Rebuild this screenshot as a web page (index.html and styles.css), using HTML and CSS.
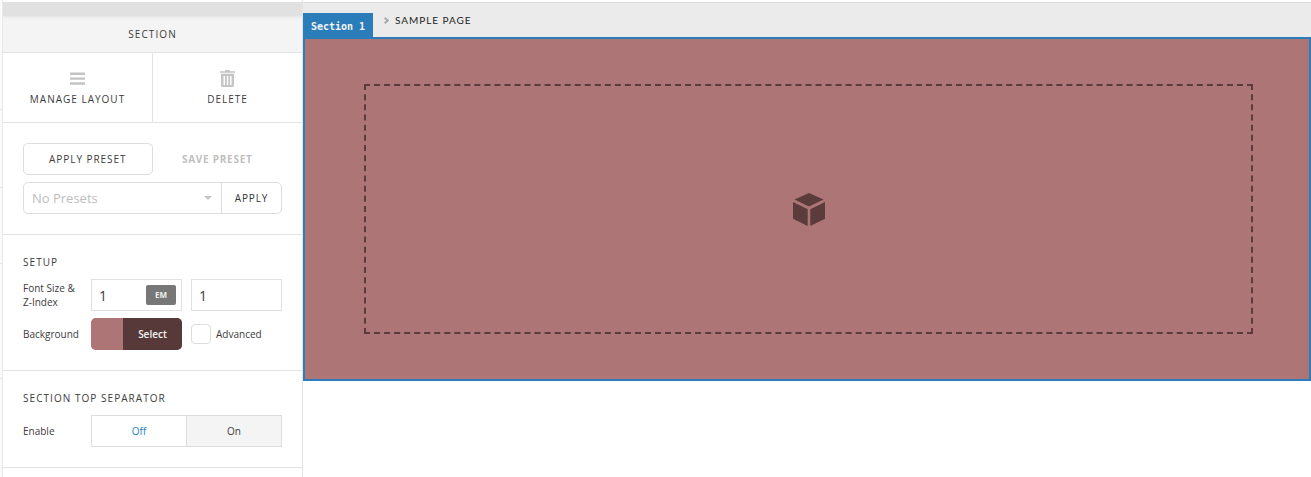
FILE: index.html
```html
<!DOCTYPE html>
<html lang="en">
<head>
<meta charset="utf-8">
<title>Section</title>
<link rel="stylesheet" href="styles.css">
</head>
<body>
<div class="app">
  <div class="gutter"></div>
  <aside class="panel">
    <div class="panel-top"></div>
    <div class="panel-title">SECTION</div>
    <div class="actions">
      <div class="action">
        <svg class="icon" width="15" height="14" viewBox="0 0 15 14"><path d="M0 1h15v2.400H0zM0 5.900h15v2.400H0zM0 10.800h15v2.400H0z" fill="#c4c4c4"/></svg>
        <span>MANAGE LAYOUT</span>
      </div>
      <div class="action">
        <svg class="icon" width="15" height="17" viewBox="0 0 15 17"><path d="M5.500 0h4l.6 1.200H15v1.600H0V1.200h4.900zM1 3.800h13V15.500a1.500 1.500 0 0 1-1.500 1.500h-10A1.500 1.500 0 0 1 1 15.500zM3.500 6v9h1.500V6zM6.800 6v9h1.500V6zM10 6v9h1.500V6z" fill="#c4c4c4" fill-rule="evenodd"/></svg>
        <span>DELETE</span>
      </div>
    </div>
    <section class="group presets">
      <div class="preset-row">
        <button class="btn-preset">APPLY PRESET</button>
        <span class="save-preset">SAVE PRESET</span>
      </div>
      <div class="preset-select">
        <span class="placeholder">No Presets</span>
        <span class="caret"></span>
        <span class="apply">APPLY</span>
      </div>
    </section>
    <section class="group setup">
      <h3 class="heading">SETUP</h3>
      <div class="field-row">
        <label class="label two-line">Font Size &amp; Z-Index</label>
        <div class="input em-input"><span>1</span><b class="unit">EM</b></div>
        <div class="input"><span>1</span></div>
      </div>
      <div class="field-row bg-row">
        <label class="label">Background</label>
        <div class="color"><i class="swatch"></i><b class="select">Select</b></div>
        <div class="check"><i class="box"></i><span>Advanced</span></div>
      </div>
    </section>
    <section class="group separator">
      <h3 class="heading">SECTION TOP SEPARATOR</h3>
      <div class="field-row">
        <label class="label">Enable</label>
        <div class="toggle"><span class="off">Off</span><span class="on">On</span></div>
      </div>
    </section>
  </aside>
  <main class="stage">
    <div class="crumbs">
      <span class="tag">Section 1</span>
      <span class="sep"></span>
      <span class="page">SAMPLE PAGE</span>
    </div>
    <div class="hero">
      <div class="drop">
        <svg width="32" height="33" viewBox="0 0 32 33"><path d="M16 0 30.500 6.500 16 13.500 1.500 6.500zM0 9 14.700 16.200V33L0 25.800zM32 9 17.300 16.200V33L32 25.800z" fill="#5b3b3b"/></svg>
      </div>
    </div>
  </main>
</div>
</body>
</html>
```
FILE: styles.css
```css
* { box-sizing: border-box; }
html, body { margin: 0; height: 477px; overflow: hidden; background: #fff; }
body { font-family: "Open Sans", sans-serif; color: #3c3c3c; }
.app { display: flex; height: 477px; }
.gutter {
  width: 3px; flex: none;
  background:
    linear-gradient(#e6e6e6, #e6e6e6) 0 109px / 2px 1px no-repeat,
    linear-gradient(#e6e6e6, #e6e6e6) 0 187px / 2px 1px no-repeat,
    linear-gradient(#e6e6e6, #e6e6e6) 0 263px / 2px 1px no-repeat,
    linear-gradient(#e6e6e6, #e6e6e6) 0 378px / 2px 1px no-repeat,
    linear-gradient(90deg, #fafafa 0 2px, #e8e8e8 2px);
}
.panel { width: 300px; flex: none; border-right: 1px solid #e4e4e4; background: #fff; padding-top: 2px; overflow: hidden; }
.panel-top { height: 14px; background: #e1e1e1; box-shadow: 0 1px 3px rgba(0,0,0,.08); position: relative; }
.panel-title { height: 37px; line-height: 36px; background: #f4f4f4; border-bottom: 1px solid #e3e3e3; text-align: center; font-size: 10px; font-weight: 500; letter-spacing: 1.1px; }
.actions { display: flex; height: 70px; border-bottom: 1px solid #e3e3e3; }
.action { flex: 1; display: flex; flex-direction: column; align-items: center; justify-content: flex-start; height: 69px; padding-top: 17px; font-size: 10px; font-weight: 500; letter-spacing: 1px; }
.action:first-child { border-right: 1px solid #e3e3e3; }
.action .icon { height: 17px; margin-bottom: 5px; }
.action span { line-height: 14px; }
.group { border-bottom: 1px solid #e3e3e3; padding: 0 20px; }
.presets { height: 112px; padding-top: 20px; }
.preset-row { display: flex; align-items: center; }
.btn-preset { width: 130px; height: 32px; border: 1px solid #ddd; border-radius: 5px; background: #fff; font: 500 10px "Open Sans", sans-serif; letter-spacing: .95px; color: #3c3c3c; padding: 0; }
.save-preset { width: 130px; text-align: center; font-size: 10px; font-weight: 700; letter-spacing: .75px; color: #bfbfbf; }
.preset-select { display: flex; align-items: center; margin-top: 7px; width: 259px; height: 32px; border: 1px solid #ddd; border-radius: 5px; }
.placeholder { flex: 1; padding-left: 8px; font-size: 13px; color: #bdbdbd; }
.caret { width: 0; height: 0; border: 4px solid transparent; border-top: 4px solid #c4c4c4; border-bottom: 0; margin-right: 9px; }
.apply { width: 60px; height: 30px; line-height: 30px; text-align: center; border-left: 1px solid #ddd; font-size: 10px; font-weight: 500; letter-spacing: .9px; color: #333; }
.setup { height: 136px; padding-top: 21px; }
.heading { margin: 0; font-size: 10px; line-height: 13px; font-weight: 500; letter-spacing: 1.05px; }
.field-row { display: flex; align-items: center; }
.setup .field-row { margin-top: 10px; }
.setup .bg-row { margin-top: 7px; }
.label { width: 68px; flex: none; font-size: 10px; line-height: 14px; }
.two-line { padding-right: 10px; }
.input { width: 91px; height: 32px; border: 1px solid #e0e0e0; display: flex; align-items: center; justify-content: space-between; padding-left: 7px; padding-right: 5px; font-size: 14px; }
.em-input { margin-right: 9px; }
.unit { width: 30px; height: 20px; line-height: 20px; border-radius: 2px; background: #777; color: #eee; text-align: center; font-size: 8px; font-weight: 700; }
.color { display: flex; width: 91px; height: 32px; border-radius: 5px; overflow: hidden; margin-right: 9px; box-shadow: inset 0 0 0 1px rgba(80,50,50,.5); }
.swatch { width: 32px; background: #ad7575; }
.select { flex: 1; background: #573939; color: #f2f2f2; text-align: center; line-height: 32px; font-size: 10px; font-weight: 600; }
.check { display: flex; align-items: center; font-size: 10px; }
.box { width: 20px; height: 20px; border: 1px solid #ddd; border-radius: 4px; margin-right: 5px; background: #fff; }
.separator { height: 97px; padding-top: 21px; }
.separator .field-row { margin-top: 10px; }
.toggle { display: flex; width: 191px; height: 32px; border: 1px solid #ddd; font-size: 10px; }
.toggle span { flex: 1; text-align: center; line-height: 30px; }
.off { color: #1f7fc0; background: #fff; border-right: 1px solid #ddd; }
.on { background: #f4f4f4; }
.stage { flex: 1; min-width: 0; }
.crumbs { height: 39px; margin-top: 2px; background: #ebebeb; border-top: 1px solid #d9d9d9; display: flex; align-items: flex-start; }
.tag { width: 70px; height: 24px; margin-top: 10px; padding-top: 2px; background: #2a7db8; color: #f4f4f4; font: 700 10px/24px "DejaVu Sans Mono", monospace; text-align: center; }
.sep { width: 5px; height: 5px; margin: 15px 7px 0 10px; border-top: 2px solid #aaa; border-right: 2px solid #aaa; transform: rotate(45deg); }
.page { margin-top: 10px; font: 400 10px/15px "Lato", sans-serif; letter-spacing: .95px; color: #222; }
.hero { height: 344px; margin-top: -4px; background: #ad7575; border: 2px solid #2a7db8; padding: 45px 56px 0 59px; }
.drop { height: 250px; border: 2px dashed #5b3b3b; display: flex; align-items: center; justify-content: center; }
```
